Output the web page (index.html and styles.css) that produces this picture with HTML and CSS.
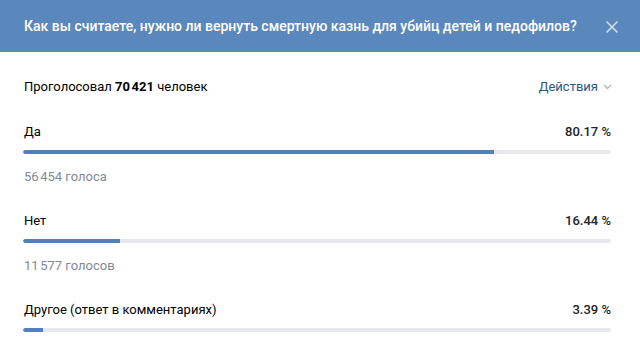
FILE: index.html
```html
<!DOCTYPE html>
<html lang="ru">
<head>
  <meta charset="UTF-8">
  <title>Опрос</title>
  <link rel="stylesheet" href="styles.css">
</head>
<body>

<div class="poll-box">
  <div class="poll-header">
    <div class="poll-title">Как вы считаете, нужно ли вернуть смертную казнь для убийц детей и педофилов?</div>
    <svg class="close-icon" width="12" height="12" viewBox="0 0 12 12">
      <path d="M1 1 L11 11 M11 1 L1 11" stroke="#d3e0ef" stroke-width="1.6" stroke-linecap="round" fill="none"/>
    </svg>
  </div>

  <div class="poll-body">
    <div class="poll-summary">
      <div>Проголосовал <b>70&#8239;421</b> человек</div>
      <div class="actions">Действия
        <svg width="9" height="6" viewBox="0 0 9 6"><path d="M1 1 L4.5 4.5 L8 1" stroke="#a6b3c2" stroke-width="1.2" fill="none"/></svg>
      </div>
    </div>

    <div class="option">
      <div class="option-row"><span>Да</span><span class="percent">80.17 %</span></div>
      <div class="bar"><div class="bar-fill" style="width: 80.17%"></div></div>
      <div class="votes">56&#8239;454 голоса</div>
    </div>

    <div class="option">
      <div class="option-row"><span>Нет</span><span class="percent">16.44 %</span></div>
      <div class="bar"><div class="bar-fill" style="width: 16.44%"></div></div>
      <div class="votes">11&#8239;577 голосов</div>
    </div>

    <div class="option">
      <div class="option-row"><span>Другое (ответ в комментариях)</span><span class="percent">3.39 %</span></div>
      <div class="bar"><div class="bar-fill" style="width: 3.39%"></div></div>
    </div>
  </div>
</div>

</body>
</html>
```

FILE: styles.css
```css
body { margin: 0; font-family: Roboto, "Open Sans", Arial, sans-serif; background: #fff; color: #000; overflow: hidden; }
.poll-box { width: 640px; }
.poll-header { height: 52px; background: #5a88bd; display: flex; align-items: center; justify-content: space-between; padding: 0 22px 0 24px; box-sizing: border-box; }
.poll-title { color: #fff; font-size: 14px; font-weight: 500; }
.close-icon { display: block; margin-top: 1px; }
.poll-body { padding: 26px 29px 0 23px; }
.poll-summary { display: flex; justify-content: space-between; align-items: center; font-size: 13px; line-height: 18px; padding-left: 1px; }
.poll-summary b { font-weight: 700; }
.actions { color: #2a5885; display: flex; align-items: center; gap: 5px; margin-right: -1px; }
.option { margin-top: 27px; }
.option + .option { margin-top: 26px; }
.option-row { display: flex; justify-content: space-between; font-size: 13px; line-height: 18px; padding-left: 1px; }
.percent { font-weight: 500; color: #222; }
.bar { height: 4px; margin-top: 9px; background: #e7e8ec; border-radius: 2px; overflow: hidden; }
.bar-fill { height: 100%; background: #5181b8; border-radius: 2px 0 0 2px; }
.votes { margin-top: 14px; font-size: 13px; line-height: 18px; color: #828a96; padding-left: 1px; }
```
